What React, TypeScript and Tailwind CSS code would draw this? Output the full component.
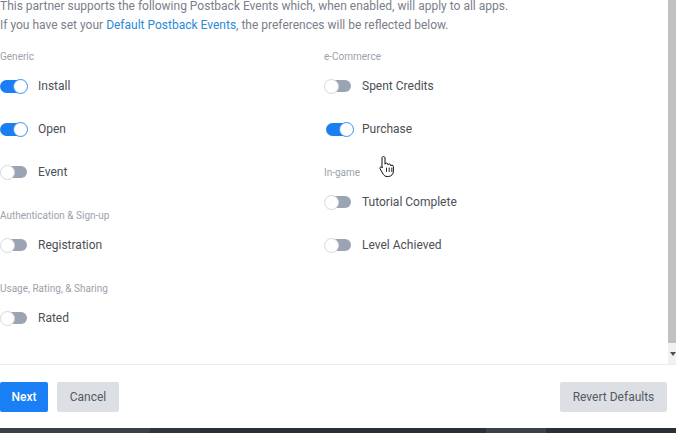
import React from 'react'

type Item = { label: string; on?: boolean; nudge?: boolean }
type Section = { title: string; items: Item[] }

const leftSections: Section[] = [
  { title: 'Generic', items: [{ label: 'Install', on: true }, { label: 'Open', on: true }, { label: 'Event' }] },
  { title: 'Authentication & Sign-up', items: [{ label: 'Registration' }] },
  { title: 'Usage, Rating, & Sharing', items: [{ label: 'Rated' }] },
]

const rightSections: Section[] = [
  { title: 'e-Commerce', items: [{ label: 'Spent Credits' }, { label: 'Purchase', on: true, nudge: true }] },
  { title: 'In-game', items: [{ label: 'Tutorial Complete' }, { label: 'Level Achieved' }] },
]

function Toggle({ on }: { on?: boolean }) {
  return (
    <span className="relative block w-[28px] h-[15px] shrink-0">
      <span
        className={
          on
            ? 'absolute left-0 right-[1px] top-[1px] h-[13px] rounded-full bg-[#1a7ff2]'
            : 'absolute left-[2px] right-[1px] top-[1.5px] h-[12px] rounded-full bg-[#9ba4b4]'
        }
      />
      <span
        className={
          on
            ? 'absolute right-0 top-0 w-[15px] h-[15px] rounded-full bg-white border border-[#3d8ff0]'
            : 'absolute left-0 top-0 w-[15px] h-[15px] rounded-full bg-white border border-[#d4d8de]'
        }
      />
    </span>
  )
}

function Column({ sections, width }: { sections: Section[]; width?: string }) {
  return (
    <div className={width}>
      {sections.map((s) => (
        <div key={s.title}>
          <div className="h-[30px] pt-[14px] text-[10px] leading-[15px] text-[#9ca1aa]">{s.title}</div>
          {s.items.map((it) => (
            <div key={it.label} className="h-[43px] flex items-center">
              <div className={it.nudge ? 'ml-[2px] mr-[8px]' : 'mr-[10px]'}>
                <Toggle on={it.on} />
              </div>
              <span className="text-[12px] text-[#4b4f56]">{it.label}</span>
            </div>
          ))}
        </div>
      ))}
    </div>
  )
}

function HandCursor() {
  return (
    <svg className="absolute left-[378px] top-[155px]" width="18" height="22" viewBox="0 0 18 22">
      <path
        d="M5.5 1.5c.9 0 1.5.6 1.5 1.5v6.2c.2-.7.8-1.1 1.5-1.1.8 0 1.4.6 1.4 1.4v.4c.2-.6.8-1 1.4-1 .8 0 1.4.6 1.4 1.4v.6c.2-.5.7-.8 1.3-.8.8 0 1.4.6 1.4 1.4v4.6c0 3-2.1 5.4-5.1 5.4H9.1c-1.6 0-2.8-.7-3.700-2L2.2 14c-.5-.7-.3-1.6.4-2 .6-.4 1.4-.2 1.8.3L4 12.9V3c0-.9.6-1.5 1.5-1.5z"
        fill="#fff"
        stroke="#111"
        strokeWidth="1"
        strokeLinejoin="round"
      />
      <path d="M8.5 13v3.5M11.2 13v3.5M13.8 13v3.5" stroke="#111" strokeWidth="0.9" strokeLinecap="round" />
    </svg>
  )
}

export default function App() {
  return (
    <div className="relative w-[676px] h-[433px] overflow-hidden bg-white" style={{ fontFamily: 'Roboto, "Noto Sans", sans-serif' }}>
      <div className="flex h-[364px]">
        <div className="flex-1 overflow-hidden">
          <div className="-mt-[3px] text-[12px] leading-[19px] text-[#7a808a]">
            <p className="whitespace-nowrap">
              This partner supports the following Postback Events which, when enabled, will apply to all apps.
            </p>
            <p className="whitespace-nowrap">
              If you have set your <span className="text-[#2a8bd6]">Default Postback Events</span>, the preferences will be
              reflected below.
            </p>
          </div>
          <div className="flex -mt-[0.5px]">
            <Column sections={leftSections} width="w-[324px]" />
            <Column sections={rightSections} />
          </div>
        </div>
        <div className="w-[8px] flex flex-col bg-[#f1f1f1]">
          <div className="h-[343px] bg-[#c1c1c1]" />
          <div className="flex-1 flex items-center justify-end">
            <span className="block w-0 h-0 border-l-[3px] border-r-[3px] border-t-[4px] border-l-transparent border-r-transparent border-t-[#505050]" />
          </div>
        </div>
      </div>
      <div className="h-[1px] bg-[#ececec]" />
      <div className="h-[63px] flex items-center justify-between pr-[9px]">
        <div className="flex items-center gap-[9px]">
          <button className="w-[48px] h-[30px] rounded-[2px] bg-[#1a7ef5] text-white text-[12px] font-medium">Next</button>
          <button className="w-[62px] h-[30px] rounded-[2px] bg-[#dcdfe4] text-[#555a61] text-[12px]">Cancel</button>
        </div>
        <button className="w-[107px] h-[30px] rounded-[2px] bg-[#dcdfe4] text-[#555a61] text-[12px]">Revert Defaults</button>
      </div>
      <div className="h-[5px] flex">
        <div className="w-[150px] bg-[#3a4046]" />
        <div className="w-[50px] bg-[#2f353b]" />
        <div className="flex-1 bg-[#2a3036]" />
        <div className="w-[60px] bg-[#3b4147]" />
        <div className="w-[130px] bg-[#2a3036]" />
      </div>
      <HandCursor />
    </div>
  )
}
